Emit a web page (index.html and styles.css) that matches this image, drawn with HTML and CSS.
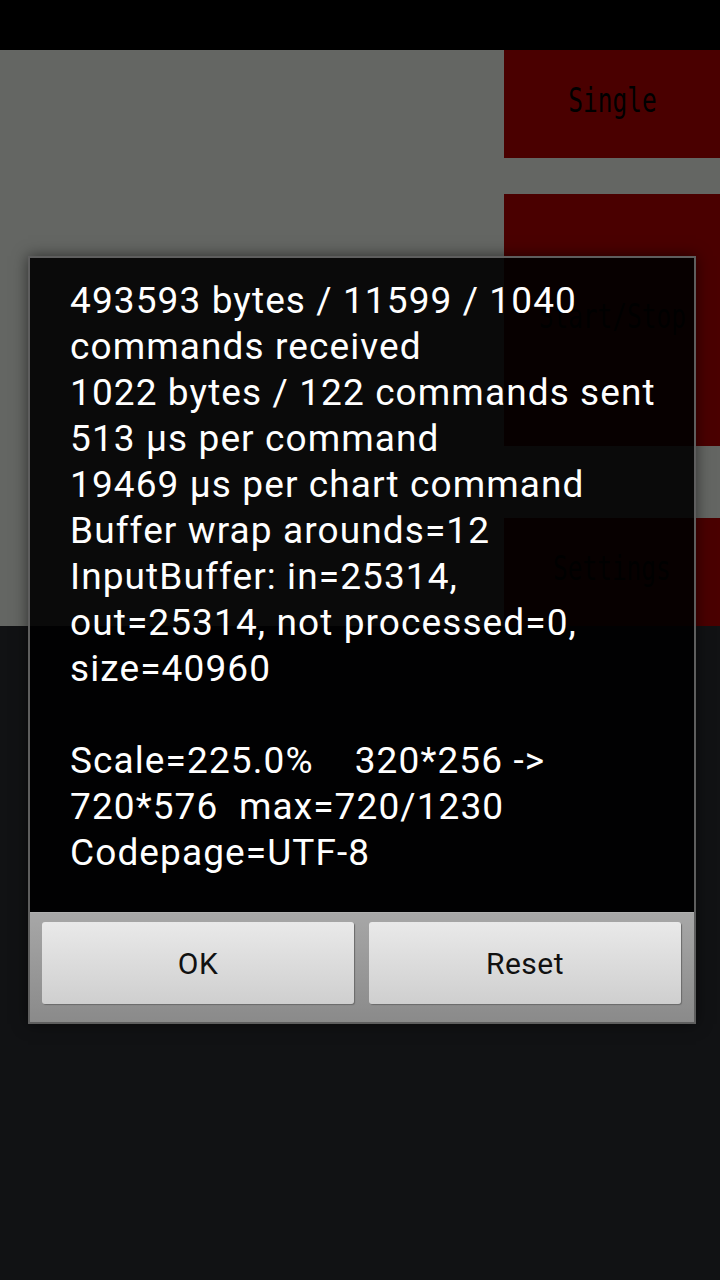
FILE: index.html
```html
<!DOCTYPE html>
<html>
<head>
<meta charset="utf-8">
<link rel="stylesheet" href="styles.css">
</head>
<body>
<div class="screen">
  <div class="statusbar"></div>
  <div class="app">
    <div class="canvas"></div>
    <div class="side">
      <div class="btn-red h108"><span class="mono">Single</span></div>
      <div class="gap36"></div>
      <div class="btn-red h252"><span class="mono">Start/Stop</span></div>
      <div class="gap72"></div>
      <div class="btn-red h108"><span class="mono">Settings</span></div>
    </div>
  </div>
  <div class="rest"></div>

  <div class="dialog">
    <div class="msg">493593 bytes / 11599 / 1040
commands received
1022 bytes / 122 commands sent
513 µs per command
19469 µs per chart command
Buffer wrap arounds=12
InputBuffer: in=25314,
out=25314, not processed=0,
size=40960

Scale=225.0%    320*256 -&gt;
720*576  max=720/1230
Codepage=UTF-8</div>
    <div class="bar">
      <div class="dbtn">OK</div>
      <div class="dbtn">Reset</div>
    </div>
  </div>
</div>
</body>
</html>
```
FILE: styles.css
```css
* { box-sizing: border-box; }
html, body { margin: 0; padding: 0; }
body {
  width: 720px;
  height: 1280px;
  background: #111214;
  font-family: Roboto, "Liberation Sans", sans-serif;
  overflow: hidden;
}
.screen {
  position: relative;
  width: 720px;
  height: 1280px;
  display: flex;
  flex-direction: column;
}
.statusbar { height: 50px; background: #000; }
.app { height: 576px; display: flex; background: #646663; }
.canvas { flex: 1; }
.side { width: 216px; display: flex; flex-direction: column; }
.btn-red {
  background: #4a0000;
  display: flex;
  align-items: center;
  justify-content: center;
}
.h108 { height: 108px; }
.h252 { height: 252px; }
.gap36 { height: 36px; }
.gap72 { height: 72px; }
.mono {
  display: inline-block;
  font-family: "DejaVu Sans Mono", "Liberation Mono", monospace;
  font-size: 34px;
  line-height: 40px;
  margin-bottom: 8px;
  color: #000;
  transform: scaleX(0.72);
}
.rest { flex: 1; background: #111214; }

.dialog {
  position: absolute;
  left: 28px;
  top: 256px;
  width: 668px;
  height: 768px;
  border: 2px solid #5e5e5e;
  box-shadow: 0 0 14px rgba(0,0,0,0.55);
  display: flex;
  flex-direction: column;
}
.msg {
  height: 654px;
  background: rgba(0,0,0,0.9);
  color: #fff;
  font-size: 37px;
  letter-spacing: 1.1px;
  line-height: 46px;
  padding: 20px 0 36px 40px;
  white-space: pre;
}
.bar {
  flex: 1;
  background: linear-gradient(#a7a7a7, #8a8a8a);
  border-top: 1px solid #b0b0b0;
  display: flex;
  gap: 15px;
  padding: 9px 13px 18px 12px;
}
.dbtn {
  flex: 1;
  height: 82px;
  background: linear-gradient(#e9e9e9, #cfcfcf);
  border-radius: 3px;
  box-shadow: 1px 1px 1px #6a6a6a;
  display: flex;
  align-items: center;
  justify-content: center;
  font-size: 30px;
  letter-spacing: 0.5px;
  color: #111;
}
```
